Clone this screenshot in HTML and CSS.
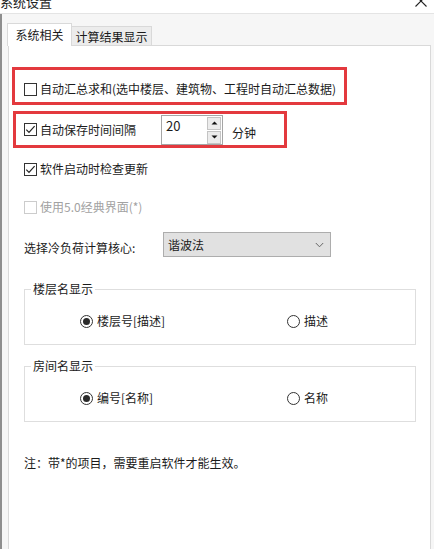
FILE: index.html
```html
<!DOCTYPE html>
<html lang="zh-CN">
<head>
<meta charset="utf-8">
<title>系统设置</title>
<link rel="stylesheet" href="styles.css">
</head>
<body>
<div class="window">
  <div class="titlebar">
    <span class="title">系统设置</span>
    <svg class="close" width="14" height="14" viewBox="0 0 14 14"><path d="M1.5 1.5 L12.5 12.5 M12.5 1.5 L1.5 12.5" stroke="#222" stroke-width="1.1" fill="none"/></svg>
  </div>
  <div class="body">
    <div class="tabs">
      <div class="tab active">系统相关</div>
      <div class="tab">计算结果显示</div>
    </div>
    <div class="panel">
      <div class="redbox box1">
        <label class="check"><span class="cb"></span><span>自动汇总求和(选中楼层、建筑物、工程时自动汇总数据)</span></label>
      </div>
      <div class="redbox box2">
        <label class="check"><span class="cb checked"><svg width="13" height="13" viewBox="0 0 13 13"><path d="M2.3 6.6 L5 9.4 L10.6 3.2" stroke="#222" stroke-width="1.2" fill="none"/></svg></span><span>自动保存时间间隔</span></label>
        <div class="spin">
          <span class="spin-val">20</span>
          <div class="spin-btns">
            <span class="sbtn"><svg width="7" height="4" viewBox="0 0 7 4"><path d="M0.5 3.5 L3.5 0.5 L6.5 3.5 Z" fill="#111"/></svg></span>
            <span class="sbtn"><svg width="7" height="4" viewBox="0 0 7 4"><path d="M0.5 0.5 L3.5 3.5 L6.5 0.5 Z" fill="#111"/></svg></span>
          </div>
        </div>
        <span class="unit">分钟</span>
      </div>
      <label class="check row3"><span class="cb checked"><svg width="13" height="13" viewBox="0 0 13 13"><path d="M2.3 6.6 L5 9.4 L10.6 3.2" stroke="#222" stroke-width="1.2" fill="none"/></svg></span><span>软件启动时检查更新</span></label>
      <label class="check row4 disabled"><span class="cb"></span><span>使用5.0经典界面(*)</span></label>
      <div class="selrow">
        <span class="sellabel">选择冷负荷计算核心:</span>
        <div class="select"><span>谐波法</span><svg width="9" height="6" viewBox="0 0 9 6"><path d="M0.8 1 L4.5 4.8 L8.2 1" stroke="#666" stroke-width="1" fill="none"/></svg></div>
      </div>
      <fieldset class="group g1">
        <legend>楼层名显示</legend>
        <div class="radios">
          <label class="radio first"><span class="rb on"></span><span>楼层号[描述]</span></label>
          <label class="radio"><span class="rb"></span><span>描述</span></label>
        </div>
      </fieldset>
      <fieldset class="group g2">
        <legend>房间名显示</legend>
        <div class="radios">
          <label class="radio first"><span class="rb on"></span><span>编号[名称]</span></label>
          <label class="radio"><span class="rb"></span><span>名称</span></label>
        </div>
      </fieldset>
      <p class="note">注：带*的项目，需要重启软件才能生效。</p>
    </div>
  </div>
</div>
</body>
</html>
```
FILE: styles.css
```css
* { box-sizing: border-box; }
html, body { margin: 0; padding: 0; }
body {
  width: 434px;
  height: 549px;
  overflow: hidden;
  background: #f6f6f6;
  font-family: "Noto Sans CJK SC", "Noto Sans", sans-serif;
  font-size: 12px;
  line-height: 16px;
  color: #1b1b1b;
}
.window { width: 434px; height: 549px; display: flex; flex-direction: column; }
.titlebar {
  height: 14px;
  flex: none;
  background: #ffffff;
  border-bottom: 1px solid #e4e4e4;
  display: flex;
  justify-content: space-between;
  align-items: flex-start;
}
.title { font-size: 13px; line-height: 16px; margin-top: -6px; margin-left: 0; color: #222; }
.close { margin-top: -6px; margin-right: 6px; }
.body {
  flex: 1;
  border-left: 2px solid #8e8e8e;
  display: flex;
  flex-direction: column;
}
.tabs {
  height: 31px;
  flex: none;
  display: flex;
  align-items: flex-end;
  padding-left: 5px;
}
.tab {
  height: 19px;
  width: 80px;
  background: #ececec;
  border: 1px solid #d9d9d9;
  border-left: none;
  border-bottom: none;
  text-align: center;
  line-height: 19px;
}
.tab.active {
  position: relative;
  z-index: 1;
  width: 65px;
  height: 23px;
  margin-bottom: -1px;
  background: #ffffff;
  border-left: 1px solid #d9d9d9;
  line-height: 22px;
}
.panel {
  margin-left: 6px;
  width: 423px;
  height: 520px;
  background: #ffffff;
  border: 1px solid #d9d9d9;
  display: flex;
  flex-direction: column;
  align-items: flex-start;
}
.redbox {
  border: 3px solid #e3393e;
  display: flex;
  align-items: center;
}
.box1 { margin-top: 21px; margin-left: 3px; width: 335px; height: 38px; padding-left: 9px; padding-top: 6px; }
.box2 { margin-top: 6px; margin-left: 4px; width: 274px; height: 37px; padding-left: 8px; }
.check { display: flex; align-items: center; gap: 3px; white-space: nowrap; }
.cb {
  width: 13px; height: 13px; flex: none;
  border: 1px solid #333;
  background: #fff;
  display: flex; align-items: center; justify-content: center;
}
.cb svg { display: block; margin: -1px; }
.disabled { color: #a2a2a2; }
.disabled .cb { border-color: #cccccc; }
.spin {
  margin-left: 25px;
  width: 62px; height: 30px;
  border: 1px solid #a5a5a5;
  background: #fff;
  display: flex;
  justify-content: space-between;
}
.spin-val { font-size: 13px; padding-left: 4px; padding-top: 2px; line-height: 16px; }
.spin-btns { display: flex; flex-direction: column; gap: 1px; padding: 1px 1px 0 0; }
.sbtn {
  width: 14px; height: 13px;
  border: 1px solid #c4c4c4;
  background: #ececec;
  display: flex; align-items: center; justify-content: center;
}
.sbtn svg { display: block; }
.unit { margin-left: 9px; margin-top: 7px; }
.row3 { margin-top: 13px; margin-left: 15px; }
.row4 { margin-top: 22px; margin-left: 15px; }
.selrow { margin-top: 17px; margin-left: 15px; display: flex; align-items: flex-start; }
.sellabel { width: 139px; padding-top: 8px; }
.select {
  width: 168px; height: 25px;
  background: #e1e1e1;
  border: 1px solid #adadad;
  display: flex; align-items: center; justify-content: space-between;
  padding: 0 6px 0 4px;
}
.select svg { display: block; }
.group {
  margin: 24px 0 0 15px;
  padding: 16px 0 15px 0;
  width: 392px;
  min-width: 0;
  border: 1px solid #dedede;
}
.g2 { margin-top: 13px; }
.group legend { margin-left: 6px; padding: 0 2px; line-height: 16px; }
.radios { display: flex; padding-left: 55px; }
.radio { display: flex; align-items: center; gap: 4px; white-space: nowrap; }
.radio.first { width: 207px; }
.rb {
  width: 13px; height: 13px; flex: none;
  border: 1px solid #333; border-radius: 50%;
  background: #fff;
  display: flex; align-items: center; justify-content: center;
}
.rb.on::after { content: ""; width: 7px; height: 7px; border-radius: 50%; background: #2a2a2a; }
.note { margin: 33px 0 0 15px; }
```
